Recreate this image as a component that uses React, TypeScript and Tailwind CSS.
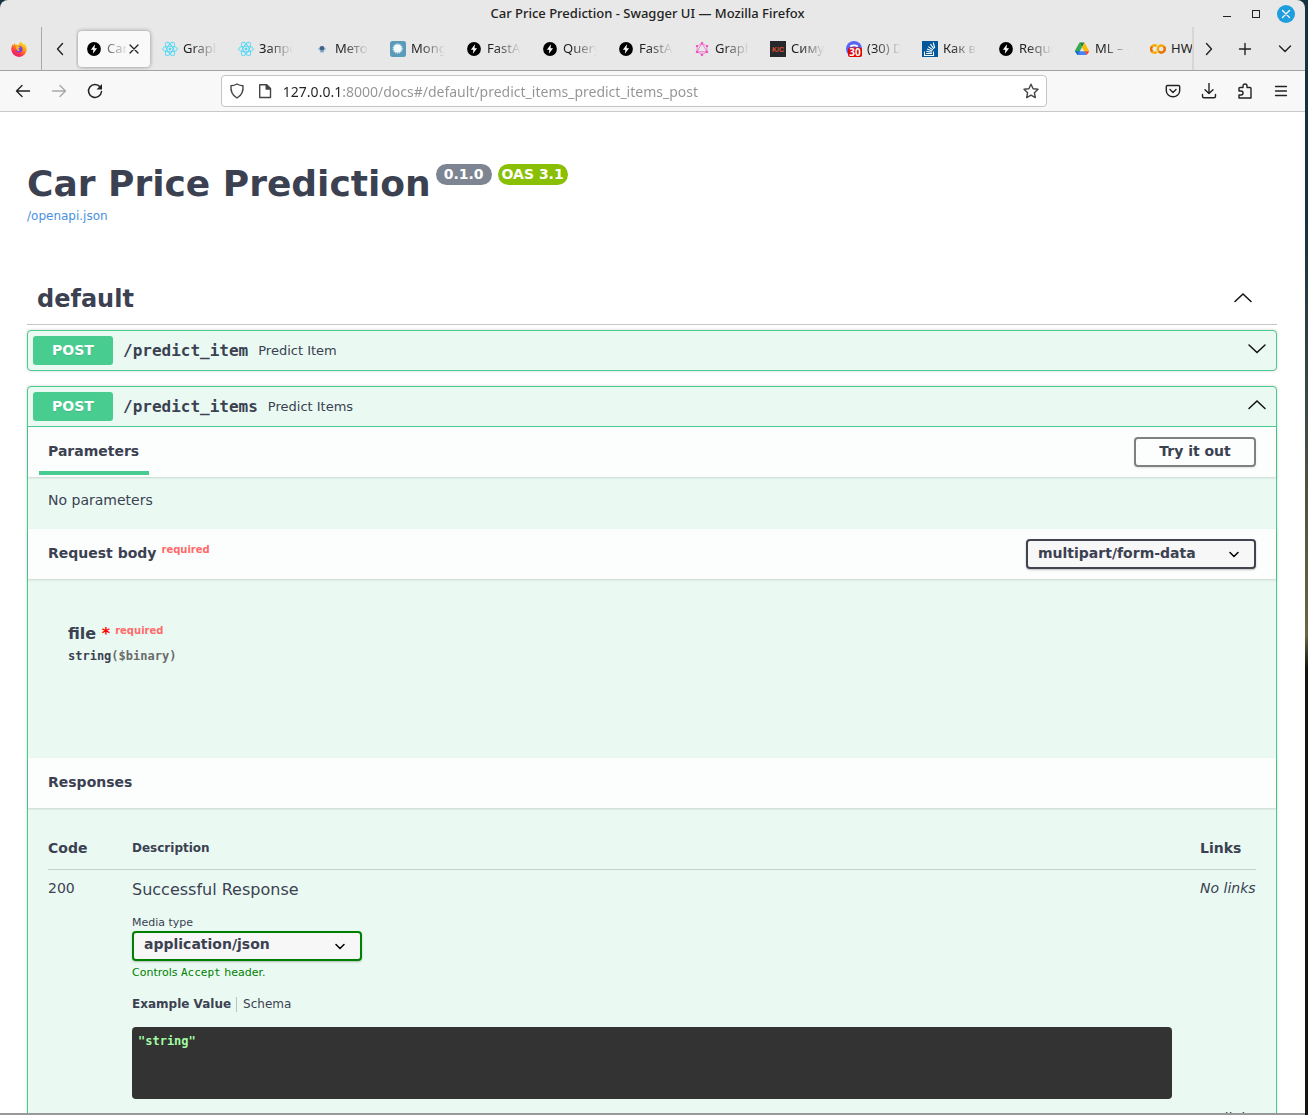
import React, { useState } from "react";
import { SiGraphql } from "react-icons/si";

const FastApiIcon = () => (
  <svg viewBox="0 0 16 16" className="size-4">
    <circle cx="8" cy="8" r="6.900" fill="#000" />
    <path d="M9 3.300L4.900 8.800H7.400L6.800 12.700L11.100 7.200H8.500z" fill="#fff" />
  </svg>
);

const ReactIcon = () => (
  <svg viewBox="0 0 16 16" className="size-4" fill="none" stroke="#4fd8f7" strokeWidth="0.9">
    <ellipse cx="8" cy="8" rx="7.4" ry="2.9" />
    <ellipse cx="8" cy="8" rx="7.4" ry="2.9" transform="rotate(60 8 8)" />
    <ellipse cx="8" cy="8" rx="7.4" ry="2.9" transform="rotate(120 8 8)" />
    <circle cx="8" cy="8" r="1.4" fill="#4fd8f7" stroke="none" />
  </svg>
);

const EyeIcon = () => (
  <svg viewBox="0 0 16 16" className="size-4">
    <path d="M3.600 8q4.400-5.600 8.800 0q-4.400 5.400-8.800 0z" fill="#9fd0e8" />
    <circle cx="8" cy="7.300" r="2.400" fill="#4a5f86" />
    <path d="M6 10.800h4" stroke="#6b8fb0" strokeWidth="1" />
  </svg>
);

const MongooseIcon = () => (
  <svg viewBox="0 0 16 16" className="size-4">
    <rect width="16" height="16" rx="2.500" fill="#5a9bb9" />
    <circle cx="7.600" cy="7.600" r="4.400" fill="none" stroke="#cfe4ee" strokeWidth="1.400" strokeDasharray="1.200 0.800" />
    <circle cx="7.600" cy="7.600" r="4" fill="#f4fafc" />
  </svg>
);

const GraphqlIcon = () => <SiGraphql className="size-4 p-px text-[#f04bc0]" />;

const KcIcon = () => (
  <svg viewBox="0 0 16 16" className="size-4">
    <rect width="16" height="16" fill="#25282d" />
    <text x="8" y="10.500" textAnchor="middle" fontSize="7" fontWeight="700" fontFamily="Liberation Sans, sans-serif" fill="#e0522c">K/C</text>
  </svg>
);

const DiscordIcon = () => (
  <svg viewBox="0 0 16 16" className="size-4">
    <circle cx="8" cy="8" r="8" fill="#5865f2" />
    <path d="M4.200 5.500Q8 3.200 11.800 5.500" stroke="#fff" strokeWidth="1.800" fill="none" />
    <rect x="2" y="6.500" width="14" height="9.500" rx="2" fill="#e00000" />
    <text x="9" y="15" textAnchor="middle" fontSize="10" fontWeight="700" fontFamily="Open Sans, sans-serif" fill="#fff">30</text>
  </svg>
);

const StackIcon = () => (
  <svg viewBox="0 0 16 16" className="size-4">
    <rect width="16" height="16" fill="#01579b" />
    <g stroke="#fff" strokeWidth="1.100" fill="none">
      <path d="M2.500 10.500v4h9v-4" />
      <path d="M4.200 12.500h5.600M4.300 10.300l5.600.9M5 8l5.300 2M6.300 5.600l4.600 3.300M8.400 3.200l3.500 4.600M11.200 1.500l1.500 5.500" />
    </g>
  </svg>
);

const DriveIcon = () => (
  <svg viewBox="0 0 16 16" className="size-4">
    <path d="M5.500 1.500h5L8 6.200z" fill="#188038" />
    <path d="M5.500 1.500L8 6.200 3.600 14 .8 10z" fill="#34a853" />
    <path d="M10.500 1.500L8 6.200l2.300 4h5z" fill="#fbbc04" />
    <path d="M3.600 10.200h7L12.600 14h-9z" fill="#4285f4" />
    <path d="M.8 10.200h4.900L3.600 14z" fill="#1967d2" />
    <path d="M10.300 10.200h5L12.800 14z" fill="#ea4335" />
  </svg>
);

const ColabIcon = () => (
  <svg viewBox="0 0 16 16" className="size-4" fill="none" strokeWidth="2.300">
    <path d="M6.800 5.200a3.600 3.600 0 1 0 0 5.600" stroke="#f9ab00" />
    <circle cx="11.300" cy="8" r="3.500" stroke="#f9ab00" />
    <path d="M8.800 10.500a3.500 3.500 0 0 0 5-5" stroke="#e8710a" />
    <path d="M2.200 5.500a3.600 3.600 0 0 0 .2 5.200" stroke="#e8710a" />
  </svg>
);

const FirefoxIcon = () => (
  <svg viewBox="0 0 16 16" className="size-4">
    <defs>
      <linearGradient id="fox" x1="0.800" y1="0" x2="0.200" y2="1">
        <stop offset="0" stopColor="#fff13c" />
        <stop offset="0.400" stopColor="#ff980e" />
        <stop offset="0.700" stopColor="#ff3647" />
        <stop offset="1" stopColor="#e31587" />
      </linearGradient>
    </defs>
    <path d="M10.300.3c.2 1.600 1.300 2 2.200 2.900l1-.4c1.400 1.400 2.200 3.400 2.200 5.300A7.700 7.700 0 0 1 .3 8.400C.2 6.300.9 4.500 1.800 3.200L2.300 4.600 3.600 2l.7 1.800c1.300-.4 2.600 0 3.300.5C8 2.700 8.800 1 10.300.3z" fill="url(#fox)" />
    <circle cx="8.200" cy="8.200" r="3.300" fill="#7542e5" />
    <path d="M4.500 5.300c1.500-.8 3-.4 3.800.5l1.200.2c-.4.800-1.800.8-2 1.500-.1 1 .9 1.700 1.900 1.300-.8 1.600-3.600 1.500-4.200-.8z" fill="#ffb01f" />
  </svg>
);

const TABS: { title: string; Icon: () => React.JSX.Element }[] = [
  { title: "Car", Icon: FastApiIcon },
  { title: "Graph", Icon: ReactIcon },
  { title: "Запро", Icon: ReactIcon },
  { title: "Мето", Icon: EyeIcon },
  { title: "Mong", Icon: MongooseIcon },
  { title: "FastA", Icon: FastApiIcon },
  { title: "Query", Icon: FastApiIcon },
  { title: "FastA", Icon: FastApiIcon },
  { title: "Graph", Icon: GraphqlIcon },
  { title: "Симу", Icon: KcIcon },
  { title: "(30) D", Icon: DiscordIcon },
  { title: "Как в", Icon: StackIcon },
  { title: "Reque", Icon: FastApiIcon },
  { title: "ML – G", Icon: DriveIcon },
  { title: "HW", Icon: ColabIcon },
];

function Glyph({ d, className = "size-4", width = 1.4 }: { d: string; className?: string; width?: number }) {
  return (
    <svg viewBox="0 0 16 16" className={className} fill="none" stroke="currentColor" strokeWidth={width} strokeLinecap="round" strokeLinejoin="round">
      <path d={d} />
    </svg>
  );
}

function TitleBar() {
  return (
    <div className="grid h-[27px] grid-cols-[1fr_auto_1fr] items-center pr-2.5">
      <span />
      <h1 className="text-[13px] font-medium text-[#222]">Car Price Prediction - Swagger UI — Mozilla Firefox</h1>
      <div className="flex items-center justify-end gap-[13px] text-[#222]">
        <button aria-label="Minimize" className="flex size-4 items-center justify-center">
          <svg viewBox="0 0 16 16" className="size-4"><path d="M4 10.500h8" stroke="currentColor" /></svg>
        </button>
        <button aria-label="Maximize" className="flex size-4 items-center justify-center">
          <svg viewBox="0 0 16 16" className="size-4"><rect x="4.500" y="4.500" width="7" height="7" fill="none" stroke="currentColor" /></svg>
        </button>
        <button aria-label="Close" className="flex size-[18px] items-center justify-center rounded-full bg-[#1f9ede] text-white">
          <Glyph d="M4 4l8 8M12 4l-8 8" className="size-3.5" width={1.5} />
        </button>
      </div>
    </div>
  );
}

function TabStrip() {
  return (
    <div className="flex h-11 items-stretch border-b border-[#a3a3a3] text-[#222]">
      <button aria-label="Firefox View" className="flex w-[42px] shrink-0 items-center justify-center border-r border-[#a9a9a9] pr-1">
        <FirefoxIcon />
      </button>
      <button aria-label="Scroll tabs left" className="flex w-[34px] shrink-0 items-center justify-center pl-0.5">
        <Glyph d="M10.500 2.500L5.500 8l5 5.500" />
      </button>
      <div role="tablist" className="flex min-w-0 flex-1 items-center overflow-hidden">
        {TABS.map(({ title, Icon }, i) => (
          <div key={i} className="w-[76px] shrink-0 px-0.5">
            <div className={i === 0 ? "flex h-9 items-center rounded bg-[#f9f9f9] pr-2 pl-2 shadow-[0_0_4px_rgba(0,0,0,0.4)]" : "flex h-9 items-center pl-2"}>
              <button role="tab" aria-selected={i === 0} className="flex min-w-0 flex-1 items-center gap-[5px] text-[13px]">
                <span className="shrink-0"><Icon /></span>
                <span
                  className={
                    i === 0
                      ? "min-w-0 flex-1 overflow-hidden text-left whitespace-nowrap [mask-image:linear-gradient(to_right,rgba(0,0,0,0.7),transparent_22px)]"
                      : i === TABS.length - 1
                        ? "min-w-0 flex-1 overflow-hidden text-left whitespace-nowrap"
                        : "min-w-0 flex-1 overflow-hidden text-left whitespace-nowrap [mask-image:linear-gradient(to_right,black_8px,transparent_34px)]"
                  }
                >
                  {title}
                </span>
              </button>
              {i === 0 && (
                <button aria-label="Close tab" className="shrink-0">
                  <Glyph d="M4 4l8 8M12 4l-8 8" width={1.3} />
                </button>
              )}
            </div>
          </div>
        ))}
      </div>
      <div className="flex w-[113px] shrink-0 items-center gap-5 border-l-2 border-[#d6d6d6] pl-[7px]">
        <button aria-label="Scroll tabs right"><Glyph d="M5.500 2.500l5 5.500-5 5.500" /></button>
        <button aria-label="New tab"><Glyph d="M8 2.500v11M2.500 8h11" /></button>
        <button aria-label="List all tabs" className="ml-1"><Glyph d="M2.500 5l5.500 5.500L13.500 5" /></button>
      </div>
    </div>
  );
}

function NavBar() {
  return (
    <div className="flex h-[41px] items-center border-b border-[#c9c9c9] bg-[#f8f8f8] px-4 pl-[15px] text-[#222]">
      <div className="flex flex-[17] items-center gap-5">
        <button aria-label="Back"><Glyph d="M14.500 8H1.500M7 2.500L1.500 8 7 13.500" /></button>
        <button aria-label="Forward" className="text-[#a8a8a8]"><Glyph d="M1.500 8h13M9 2.500L14.500 8 9 13.500" /></button>
        <button aria-label="Reload">
          <svg viewBox="0 0 16 16" className="size-4" fill="none" stroke="currentColor" strokeWidth="1.500">
            <path d="M13.200 4A6.500 6.500 0 1 0 14.500 8.500" strokeLinecap="round" />
            <path d="M15 1v5.500H9.500z" fill="currentColor" stroke="none" />
          </svg>
        </button>
      </div>
      <label className="flex h-8 w-[826px] shrink items-center rounded border border-[#c4c4c4] bg-white px-[7px] text-[#444]">
        <Glyph d="M8 1c2 1.300 4 1.700 6 1.800.5 5-1 9.500-6 12.200-5-2.700-6.500-7.200-6-12.200C4 2.700 6 2.300 8 1z" />
        <svg viewBox="0 0 16 16" className="ml-3 size-4" fill="none" stroke="currentColor" strokeWidth="1.400" strokeLinejoin="round">
          <path d="M2.700 1.700h7L13.500 5.500v9H2.700z" />
          <path d="M9.200 1.700v4.300h4.300z" fill="currentColor" />
        </svg>
        <input
          aria-label="Address"
          defaultValue="127.0.0.1:8000/docs#/default/predict_items_predict_items_post"
          className="ml-2.5 min-w-0 flex-1 bg-linear-to-r from-[#222] from-[57px] to-[#939393] to-[57px] bg-clip-text text-[14px] text-transparent outline-none"
        />
        <Glyph d="M8 1.200l2.100 4.500 4.900.6-3.600 3.400.9 4.900L8 12.200l-4.300 2.400.9-4.900L1 6.300l4.900-.6z" className="size-4" />
      </label>
      <div className="flex flex-[20] items-center justify-end gap-5">
        <button aria-label="Save to Pocket"><Glyph d="M2.500 2.500h11q1.200 0 1.200 1.200v4a6.700 6 0 0 1-13.400 0v-4q0-1.200 1.200-1.200zM5 6.500l3 3 3-3" /></button>
        <button aria-label="Downloads"><Glyph d="M8 .5v10M4 6.700L8 10.500l4-3.800M1.500 11.500v1.700q0 1.500 1.500 1.500h10q1.500 0 1.500-1.500v-1.700" /></button>
        <button aria-label="Extensions"><Glyph d="M2 5.500q0-1 1-1h3V3a2 2 0 0 1 4 0v1.500h3q1 0 1 1V15H2v-3h2a2 2 0 0 0 0-4H2z" /></button>
        <button aria-label="Menu"><Glyph d="M2.500 3.500h11M2.500 8h11M2.500 12.500h11" width={1.3} /></button>
      </div>
    </div>
  );
}

function Chevron({ up }: { up?: boolean }) {
  return (
    <svg viewBox="0 0 20 20" className="size-5" fill="none" stroke="#111" strokeWidth="1.500" strokeLinecap="round">
      <path d={up ? "M2 13.500L10 6l8 7.500" : "M2 6l8 7.500L18 6"} />
    </svg>
  );
}

function Summary({ path, text, open, onToggle }: { path: string; text: string; open: boolean; onToggle: () => void }) {
  return (
    <button
      aria-expanded={open}
      onClick={onToggle}
      className={open ? "flex w-full items-center border-b border-[#49cc90] p-[5px] pr-[9px] text-left" : "flex w-full items-center p-[5px] pr-[9px] text-left"}
    >
      <span className="w-20 rounded-[3px] bg-[#49cc90] py-1 text-center text-[14px] leading-[21px] font-bold text-white text-shadow-[0_1px_0_rgba(0,0,0,0.1)]">POST</span>
      <span className="ml-2.5 font-[DejaVu_Sans_Mono,monospace] text-[16px] font-bold">{path}</span>
      <span className="ml-2.5 flex-1 text-[13px]">{text}</span>
      <span className="pb-1"><Chevron up={open} /></span>
    </button>
  );
}

function SectionHeader({ children }: { children: React.ReactNode }) {
  return <div className="flex h-[50px] items-center justify-between bg-white/80 px-5 shadow-[0_1px_2px_rgba(0,0,0,0.15)]">{children}</div>;
}

function MediaSelect({ id, label, value, green }: { id: string; label: string; value: string; green?: boolean }) {
  return (
    <span className="relative block w-[230px]">
      <select
        id={id}
        aria-label={label}
        defaultValue={value}
        className={
          green
            ? "h-[30px] w-full appearance-none rounded border-2 border-[#008000] bg-[#f7f7f7] px-2.5 pb-0.5 text-[14px] font-bold shadow-[0_1px_2px_rgba(0,0,0,0.25)]"
            : "h-[30px] w-full appearance-none rounded border-2 border-[#41444e] bg-[#f7f7f7] px-2.5 pb-0.5 text-[14px] font-bold shadow-[0_1px_2px_rgba(0,0,0,0.25)]"
        }
      >
        <option>{value}</option>
      </select>
      <svg viewBox="0 0 10 10" className="pointer-events-none absolute top-2.5 right-[17px] size-2.5" fill="none" stroke="#000" strokeWidth="1.500" strokeLinecap="round">
        <path d="M1 3.500l4 4 4-4" />
      </svg>
    </span>
  );
}

const Required = () => <sup className="ml-[5px] text-[10px] font-bold text-[#ff6b6b]">required</sup>;

function Responses() {
  return (
    <table className="w-full text-left">
      <thead>
        <tr className="h-[41px] border-b border-[#c3d5cc] align-middle">
          <th className="w-[84px] text-[14px]">Code</th>
          <th className="text-[12px]">Description</th>
          <th className="w-14 text-[14px]">Links</th>
        </tr>
      </thead>
      <tbody className="align-top">
        <tr>
          <td className="pt-2 text-[14px] leading-5">200</td>
          <td className="pt-2 pr-7 pb-px">
            <p className="text-[16px] leading-6">Successful Response</p>
            <label htmlFor="media" className="mt-[13px] block text-[11px] leading-4">Media type</label>
            <MediaSelect id="media" label="Media type" value="application/json" green />
            <p className="mt-1 text-[11px] leading-4 text-[#008000]">
              Controls <code className="font-[DejaVu_Sans_Mono,monospace]">Accept</code> header.
            </p>
            <div role="tablist" className="mt-4 flex text-[12px] leading-[15px]">
              <button role="tab" aria-selected="true" className="border-r border-[#b5c4bc] pr-[5px] font-bold">Example Value</button>
              <button role="tab" aria-selected="false" className="pl-1.5">Schema</button>
            </div>
            <pre className="mt-[15px] h-[72px] rounded bg-[#333] p-1.5 font-[DejaVu_Sans_Mono,monospace] text-[12px] leading-4 font-bold text-[#a2fca2]">"string"</pre>
          </td>
          <td className="pt-2 text-[14px] leading-5 whitespace-nowrap italic">No links</td>
        </tr>
        <tr>
          <td className="pt-2 text-[14px] leading-5">422</td>
          <td className="pt-2 text-[16px] leading-6">Validation Error</td>
          <td className="pt-2 text-[14px] leading-5 whitespace-nowrap italic">No links</td>
        </tr>
      </tbody>
    </table>
  );
}

export default function App() {
  const [sectionOpen, setSectionOpen] = useState(true);
  const [open, setOpen] = useState(true);
  return (
    <div className="h-screen overflow-hidden bg-linear-to-b from-[#143340] from-20% via-[#6b6540] via-57% to-[#12160d] to-60% pr-[3px]">
      <div className="flex h-full flex-col overflow-hidden rounded-t-lg border-b-2 border-[#999] bg-[#e8e8e8]">
        <header className="shrink-0 font-['Noto_Sans',sans-serif]">
          <TitleBar />
          <TabStrip />
          <NavBar />
        </header>
        <main className="min-h-0 flex-1 overflow-hidden bg-white pr-7 pl-[27px] font-[DejaVu_Sans,sans-serif] text-[#3b4151]">
          <div className="pt-[50px]">
            <div className="flex items-start">
              <h2 className="text-[36px] leading-[44px] font-bold">Car Price Prediction</h2>
              <span className="mt-0.5 ml-[5px] rounded-full bg-[#7d8492] px-2 text-[14px] leading-[21px] font-bold text-white">0.1.0</span>
              <span className="mt-0.5 ml-1.5 rounded-full bg-[#89bf04] px-1 text-[14px] leading-[21px] font-bold text-white">OAS 3.1</span>
            </div>
            <a href="#openapi" className="block text-[12px] leading-5 text-[#4990e2]">/openapi.json</a>
          </div>
          <section className="mt-[46px]">
            <button
              aria-expanded={sectionOpen}
              onClick={() => setSectionOpen(!sectionOpen)}
              className="flex h-[53px] w-full items-center justify-between border-b border-[#c4c6ca] pr-6 pl-2.5"
            >
              <span className="pt-0.5 text-[24px] font-bold">default</span>
              <Chevron up={sectionOpen} />
            </button>
            <div className="mt-[5px] rounded border border-[#49cc90] bg-[#eafaf3] shadow-[0_0_3px_rgba(0,0,0,0.19)]">
              <Summary path="/predict_item" text="Predict Item" open={false} onToggle={() => {}} />
            </div>
            <div className="mt-[15px] rounded border border-[#49cc90] bg-[#eafaf3] shadow-[0_0_3px_rgba(0,0,0,0.19)]">
              <Summary path="/predict_items" text="Predict Items" open={open} onToggle={() => setOpen(!open)} />
              {open && (
                <div>
                  <SectionHeader>
                    <h3 className="mt-0.5 -ml-[9px] flex h-11 w-[110px] items-center border-b-4 border-[#49cc90] pt-px pl-[9px] text-[14px] font-bold">Parameters</h3>
                    <button className="h-[30px] w-[122px] rounded border-2 border-[#808080] pb-0.5 text-[14px] font-bold shadow-[0_1px_2px_rgba(0,0,0,0.1)]">Try it out</button>
                  </SectionHeader>
                  <p className="px-5 pt-[13px] pb-[19px] text-[14px] leading-5">No parameters</p>
                  <SectionHeader>
                    <h3 className="pb-0.5 text-[14px] font-bold">Request body<Required /></h3>
                    <MediaSelect id="request" label="Request content type" value="multipart/form-data" />
                  </SectionHeader>
                  <div className="px-10 pt-[41px] pb-[94px]">
                    <h4 className="text-[16px] leading-7 font-bold">
                      file <span className="text-[#f00]">*</span><Required />
                    </h4>
                    <p className="font-[DejaVu_Sans_Mono,monospace] text-[12px] leading-4 font-bold">
                      string<span className="text-[#6b6b6b]">($binary)</span>
                    </p>
                  </div>
                  <SectionHeader>
                    <h3 className="pb-0.5 text-[14px] font-bold">Responses</h3>
                  </SectionHeader>
                  <div className="px-5 pt-5 pb-5">
                    <Responses />
                  </div>
                </div>
              )}
            </div>
          </section>
        </main>
      </div>
    </div>
  );
}
